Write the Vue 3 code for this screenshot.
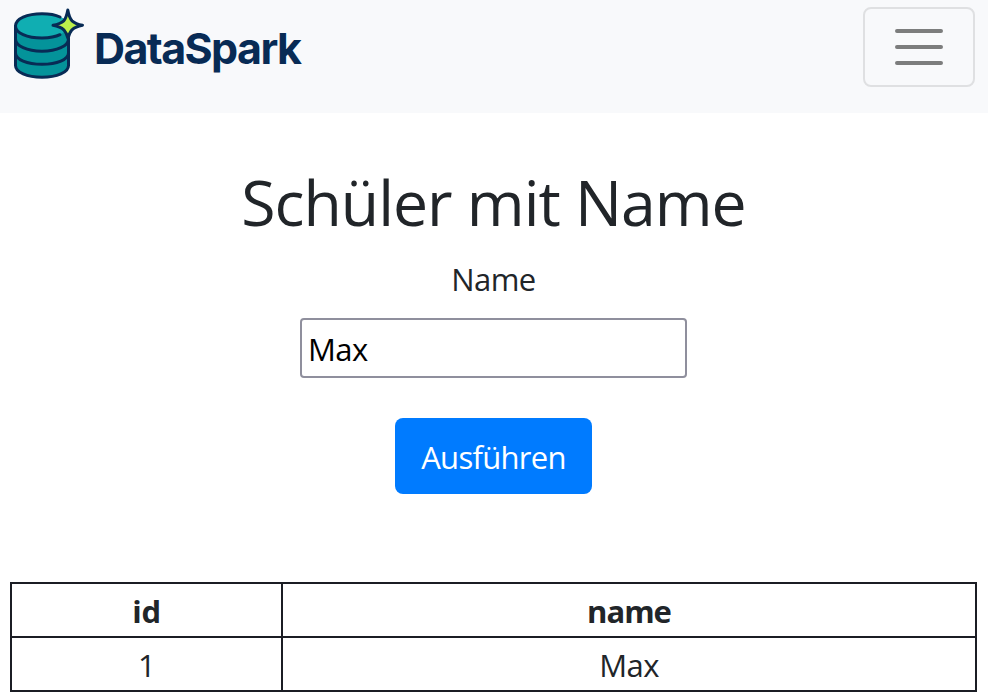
<script setup>
import { ref } from 'vue'

const name = ref('Max')
const rows = ref([{ id: 1, name: 'Max' }])
</script>

<template>
  <div class="page">
    <nav class="navbar">
      <a class="brand" aria-label="DataSpark">
        <svg class="logo" width="76" height="80" viewBox="0 0 76 80" fill="none">
          <path d="M5.500 26V65.500C5.500 72.300 17 77.300 32 77.300C47 77.300 58.500 72.300 58.500 65.500V26Z" fill="#04939a" />
          <ellipse cx="32" cy="25.700" rx="26.500" ry="12.200" fill="#10aeb2" />
          <g stroke="#082b55" stroke-width="3" stroke-linecap="round">
            <path d="M50 17C45.500 14.800 39 13.700 32 13.700C17 13.700 5.500 18.700 5.500 26C5.500 33 17 38 32 38C39.500 38 46 36.800 50 34.700" />
            <path d="M5.500 26V65.500C5.500 72.300 17 77.300 32 77.300C47 77.300 58.500 72.300 58.500 65.500V38" />
            <path d="M5.500 39C5.500 46 17 51.200 32 51.200C47 51.200 58.500 46 58.500 39" />
            <path d="M5.500 53C5.500 59.500 17 64.300 32 64.300C47 64.300 58.500 59.500 58.500 53" />
          </g>
          <path d="M57.800 10C58.800 15.500 60 18.500 62 20.800C64.300 22.800 67 24.200 72.500 25.300C67 26.400 64.300 27.700 62 29.800C60 32 59 34.500 58 38.500C57 34.500 55.800 32 53.800 29.800C51.500 27.700 48.500 26.400 43 25.300C48.500 24.200 51.500 22.800 53.800 20.800C55.700 18.500 56.800 15.500 57.800 10Z" fill="#bdf04b" stroke="#082b55" stroke-width="3" stroke-linejoin="round" />
        </svg>
        <span class="brand-name">DataSpark</span>
      </a>
      <button class="toggler" type="button" aria-label="Menü">
        <svg width="60" height="60" viewBox="0 0 30 30" fill="none">
          <path d="M4 7h22M4 15h22M4 23h22" stroke="#7c7d7d" stroke-width="2" stroke-linecap="round" />
        </svg>
      </button>
    </nav>

    <main class="content">
      <h1>Schüler mit Name</h1>
      <label for="name">Name</label>
      <input id="name" v-model="name" type="text" spellcheck="false" />
      <button class="run" type="button">Ausführen</button>
      <table>
        <thead>
          <tr><th class="col-id">id</th><th>name</th></tr>
        </thead>
        <tbody>
          <tr v-for="row in rows" :key="row.id">
            <td>{{ row.id }}</td>
            <td>{{ row.name }}</td>
          </tr>
        </tbody>
      </table>
    </main>
  </div>
</template>

<style>
body {
  margin: 0;
  background: #fff;
}
</style>

<style scoped>
.page {
  box-sizing: border-box;
  height: 700px;
  overflow: hidden;
  color: #212529;
  font-family: "Open Sans", "Noto Sans", sans-serif;
  font-size: 31px;
  line-height: 48px;
  letter-spacing: -0.6px;
}
.navbar {
  box-sizing: border-box;
  height: 113px;
  padding: 0 13px 0 10px;
  display: flex;
  justify-content: space-between;
  align-items: flex-start;
  background: #f8f9fb;
}
.brand {
  display: flex;
}
.logo {
  display: block;
}
.brand-name {
  margin: 24px 0 0 8px;
  color: #082b55;
  font-family: Inter, sans-serif;
  font-size: 43px;
  font-weight: 700;
  letter-spacing: -1.6px;
}
.toggler {
  box-sizing: border-box;
  width: 112px;
  height: 80px;
  margin-top: 7px;
  padding: 0;
  display: flex;
  align-items: center;
  justify-content: center;
  background: transparent;
  border: 2px solid #dfe0e2;
  border-radius: 8px;
}
.content {
  padding: 51px 11px 0 10px;
  display: flex;
  flex-direction: column;
  align-items: center;
}
h1 {
  margin: 0;
  font-size: 62.5px;
  font-weight: 400;
  line-height: 76px;
  letter-spacing: -1px;
}
label {
  margin-top: 15px;
}
input {
  box-sizing: border-box;
  width: 387px;
  height: 60px;
  margin-top: 15px;
  padding: 4px 6px 2px;
  color: #000;
  background: #fff;
  border: 2px solid #8f8f9d;
  border-radius: 4px;
  font: inherit;
  letter-spacing: inherit;
  outline: none;
}
.run {
  box-sizing: border-box;
  width: 197px;
  height: 76px;
  margin-top: 40px;
  padding: 2px 0 0;
  color: #fff;
  background: #007bff;
  border: 0;
  border-radius: 8px;
  font: inherit;
  letter-spacing: -0.7px;
}
table {
  width: 967px;
  margin-top: 88px;
  table-layout: fixed;
  border-collapse: collapse;
  text-align: center;
}
th,
td {
  box-sizing: border-box;
  height: 54px;
  padding: 3px 2px 1px;
  border: 2px solid #1b1d24;
}
th {
  letter-spacing: -1px;
}
.col-id {
  width: 271px;
  letter-spacing: -0.3px;
}
</style>
